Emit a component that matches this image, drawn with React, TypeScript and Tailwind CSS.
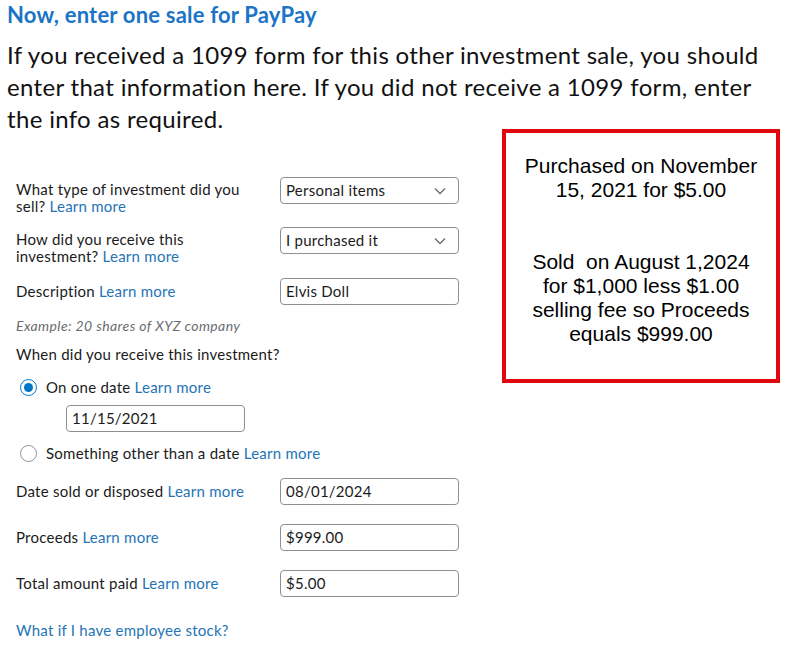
import React from "react";

const Learn = () => <span className="text-[#2574b5]">Learn more</span>;

function Chevron() {
  return (
    <svg width="12" height="8" viewBox="0 0 12 8" className="text-[#6b6c72]">
      <path d="M1 1.5 L6 6.5 L11 1.5" fill="none" stroke="currentColor" strokeWidth="1.3" />
    </svg>
  );
}

function Select({ value }: { value: string }) {
  return (
    <div className="w-[179px] h-[27px] border border-[#8d9096] rounded-[4px] flex items-center justify-between pl-[5px] pr-[12px] text-[15px]">
      <span>{value}</span>
      <Chevron />
    </div>
  );
}

function Input({ value, w = "w-[179px]" }: { value: string; w?: string }) {
  return (
    <div className={`${w} h-[27px] border border-[#8d9096] rounded-[4px] flex items-center pl-[5px] text-[15px]`}>
      {value}
    </div>
  );
}

export default function App() {
  return (
    <div className="w-[797px] h-[664px] bg-white text-[#1b1b1b] font-['Lato',sans-serif] overflow-hidden">
      <h1 className="pl-[7px] pt-[1px] text-[22px] leading-[28px] font-bold tracking-[0.2px] text-[#1b74c5]">
        Now, enter one sale for PayPay
      </h1>

      <p className="pl-[7px] mt-[10px] text-[24px] leading-[32px] tracking-[0.33px] text-[#111]">
        If you received a 1099 form for this other investment sale, you should
        <br />
        enter that information here. If you did not receive a 1099 form, enter
        <br />
        the info as required.
      </p>

      <div className="flex -mt-[6px]">
        {/* FORM */}
        <div className="w-[502px] pl-[16px] pt-[48px] text-[15px] leading-[17px] tracking-[0.25px]">
          <div className="flex h-[50px]">
            <div className="w-[264px] pt-[4px]">
              What type of investment did you
              <br />
              sell? <Learn />
            </div>
            <Select value="Personal items" />
          </div>

          <div className="flex h-[51px]">
            <div className="w-[264px] pt-[4px]">
              How did you receive this
              <br />
              investment? <Learn />
            </div>
            <Select value="I purchased it" />
          </div>

          <div className="flex items-center">
            <div className="w-[264px]">
              Description <Learn />
            </div>
            <Input value="Elvis Doll" />
          </div>

          <div className="mt-[12px] text-[14px] italic tracking-[0.4px] text-[#6b6c72]">
            Example: 20 shares of XYZ company
          </div>

          <div className="mt-[12px] text-[15px]">When did you receive this investment?</div>

          <div className="mt-[16px] flex items-center gap-[9px] pl-[4px]">
            <div className="w-[17px] h-[17px] rounded-full border-[1.5px] border-[#0077c5] flex items-center justify-center">
              <div className="w-[9px] h-[9px] rounded-full bg-[#0077c5]" />
            </div>
            <span>
              On one date <Learn />
            </span>
          </div>

          <div className="mt-[9px] pl-[50px]">
            <Input value="11/15/2021" />
          </div>

          <div className="mt-[13px] flex items-center gap-[9px] pl-[4px]">
            <div className="w-[17px] h-[17px] rounded-full border border-[#8d9096]" />
            <span>
              Something other than a date <Learn />
            </span>
          </div>

          <div className="mt-[16px] flex items-center">
            <div className="w-[264px]">
              Date sold or disposed <Learn />
            </div>
            <Input value="08/01/2024" />
          </div>

          <div className="mt-[19px] flex items-center">
            <div className="w-[264px]">
              Proceeds <Learn />
            </div>
            <Input value="$999.00" />
          </div>

          <div className="mt-[19px] flex items-center">
            <div className="w-[264px]">
              Total amount paid <Learn />
            </div>
            <Input value="$5.00" />
          </div>

          <div className="mt-[25px] text-[#2574b5]">What if I have employee stock?</div>
        </div>

        {/* NOTE BOX */}
        <div className="w-[278px] h-[254px] border-4 border-[#e0070e] pt-[21px] text-center text-[21px] leading-[24px] text-black font-['Liberation_Sans',Arial,sans-serif]">
          Purchased on November
          <br />
          15, 2021 for $5.00
          <br />
          <br />
          <br />
          Sold&nbsp; on August 1,2024
          <br />
          for $1,000 less $1.00
          <br />
          selling fee so Proceeds
          <br />
          equals $999.00
        </div>
      </div>
    </div>
  );
}
